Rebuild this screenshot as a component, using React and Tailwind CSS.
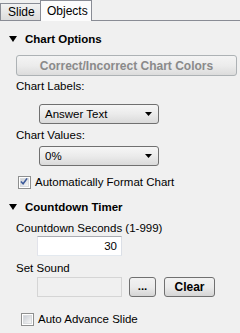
import React from "react";

function Arrow() {
  return (
    <svg width="7" height="4" viewBox="0 0 7 4" className="block">
      <path d="M0 0H7L3.5 4Z" fill="#000" />
    </svg>
  );
}

function Select({ value }) {
  return (
    <div className="ml-[39px] w-[120px] h-[20px] rounded-[3px] border border-[#707070] bg-gradient-to-b from-[#f6f6f6] via-[#ebebeb] to-[#dadada] flex items-center pl-[5px] pr-[6px] justify-between">
      <span>{value}</span>
      <Arrow />
    </div>
  );
}

function Checkbox({ checked }) {
  return (
    <div className="w-[13px] h-[13px] border border-[#8e8f8f] bg-white p-px shrink-0">
      <div className="w-full h-full bg-gradient-to-br from-[#cbcfd5] to-[#f6f6f6] border border-[#d9dbde] flex items-center justify-center">
        {checked && (
          <svg width="9" height="9" viewBox="0 0 9 9" className="block -ml-px -mt-px">
            <path d="M1 4.5L3.5 7L8 1" fill="none" stroke="#3c5a9a" strokeWidth="1.8" />
          </svg>
        )}
      </div>
    </div>
  );
}

function Header({ children, className = "" }) {
  return (
    <div className={"h-[14px] flex items-center " + className}>
      <svg width="8" height="6" viewBox="0 0 8 6" className="ml-[9px] mr-[8px] block">
        <path d="M0 0H8L4 6Z" fill="#000" />
      </svg>
      <span className="font-bold">{children}</span>
    </div>
  );
}

export default function App() {
  return (
    <div className="w-[240px] h-[333px] bg-[#f0f0f0] overflow-hidden text-black text-[11.5px] leading-[14px] font-['Liberation_Sans',Arial,sans-serif]">
      <div className="h-[21px] flex items-end border-b border-[#898c95]">
        <div className="w-[41px] h-[17px] border border-b-0 border-[#898c95] bg-gradient-to-b from-[#f2f2f2] to-[#dcdcdc] flex items-center pl-[7px] text-[12px]">
          Slide
        </div>
        <div className="w-[52px] h-[21px] -mb-px -ml-px border border-b-0 border-[#898c95] bg-[#fcfcfc] relative z-10 flex items-start pt-[3px] pl-[6px] text-[12px]">
          Objects
        </div>
      </div>

      <Header className="mt-[11px]">Chart Options</Header>

      <div className="mt-[9px] ml-[16px] w-[221px] h-[21px] rounded-[3px] border border-[#adb2b5] bg-gradient-to-b from-[#f4f4f4] via-[#ececec] to-[#dcdcdc] flex items-center justify-center font-bold text-[12px] text-[#8a8a8a]">
        Correct/Incorrect Chart Colors
      </div>

      <div className="mt-[3px] ml-[16px] h-[14px] flex items-center">Chart Labels:</div>
      <div className="mt-[11px]">
        <Select value="Answer Text" />
      </div>

      <div className="mt-[4px] ml-[16px] h-[14px] flex items-center">Chart Values:</div>
      <div className="mt-[4px]">
        <Select value="0%" />
      </div>

      <div className="mt-[9px] ml-[18px] h-[14px] flex items-center gap-[4px]">
        <Checkbox checked />
        <span>Automatically Format Chart</span>
      </div>

      <Header className="mt-[11px]">Countdown Timer</Header>

      <div className="mt-[7px] ml-[16px] h-[14px] flex items-center">Countdown Seconds (1-999)</div>
      <div className="mt-[1px] ml-[37px] w-[85px] h-[20px] border border-[#abadb3] border-l-[#e2e3ea] border-r-[#dbdfe6] border-b-[#e3e9ef] bg-white flex items-center justify-end pr-[4px]">
        30
      </div>

      <div className="mt-[5px] ml-[16px] h-[14px] flex items-center">Set Sound</div>
      <div className="mt-[2px] ml-[37px] h-[20px] flex items-stretch">
        <div className="w-[85px] border border-[#d5d5d5] bg-[#f0f0f0]" />
        <div className="ml-[7px] w-[27px] rounded-[3px] border border-[#707070] bg-gradient-to-b from-[#f2f2f2] via-[#ebebeb] to-[#d5d5d5] flex items-center justify-center font-bold pb-[2px]">
          ...
        </div>
        <div className="ml-[8px] w-[51px] rounded-[3px] border border-[#707070] bg-gradient-to-b from-[#f2f2f2] via-[#ebebeb] to-[#d5d5d5] flex items-center justify-center font-bold text-[12px]">
          Clear
        </div>
      </div>

      <div className="mt-[15px] ml-[21px] h-[14px] flex items-center gap-[4px]">
        <Checkbox />
        <span>Auto Advance Slide</span>
      </div>
    </div>
  );
}
